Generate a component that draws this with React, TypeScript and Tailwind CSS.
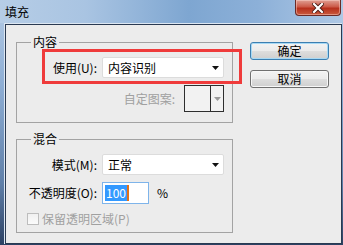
import type { ReactNode } from 'react';

function DropArrow({ muted = false }: { muted?: boolean }) {
  return (
    <svg width="7" height="4" viewBox="0 0 7 4" aria-hidden="true">
      <polygon points="0,0 7,0 3.5,4" fill={muted ? '#9a9a9a' : '#111'} />
    </svg>
  );
}

function Select({ value }: { value: string }) {
  return (
    <div className="flex h-[21px] w-[122px] items-center justify-between rounded-[2px] border border-[#dcdcdc] bg-white pr-[4px] pl-[5px]">
      <span className="leading-none">{value}</span>
      <DropArrow />
    </div>
  );
}

function Group({
  title,
  className,
  children,
}: {
  title: string;
  className: string;
  children: ReactNode;
}) {
  return (
    <div className={`relative w-[217px] border border-[#a3a3a3] ${className}`}>
      <span className="absolute top-[-8px] left-[14px] bg-[#ececec] px-[2px] leading-[14px]">
        {title}
      </span>
      {children}
    </div>
  );
}

function Button({ label, primary = false }: { label: string; primary?: boolean }) {
  return (
    <button
      type="button"
      className={`flex h-[18px] w-[79px] items-center justify-center rounded-[3px] border bg-[linear-gradient(#f3f3f3_0%,#ebebeb_48%,#dddddd_52%,#cfcfcf_100%)] leading-none ${
        primary
          ? 'border-[#3c7fb1] shadow-[inset_0_0_0_1px_#a7d9f5]'
          : 'border-[#707070] shadow-[inset_0_0_0_1px_#f7f7f7]'
      }`}
    >
      {label}
    </button>
  );
}

export default function App() {
  return (
    <div className="relative flex h-[245px] w-[343px] flex-col overflow-hidden bg-[linear-gradient(180deg,#b4cbe5_0%,#8eaed4_35%,#5f7fa8_75%,#2c4163_100%)] font-['Noto_Sans_CJK_SC','Microsoft_YaHei',sans-serif] text-[12px] text-black">
      {/* title bar */}
      <div className="flex h-[23px] items-center bg-[linear-gradient(90deg,#b6cde6_0%,#a9c4e2_25%,#7ea6d1_55%,#8cb0d8_75%,#aec8e5_100%)] pl-[5px] leading-none">
        填充
      </div>
      <div className="absolute top-0 right-[2px] flex h-[16px] w-[46px] items-center justify-center rounded-b-[4px] border border-t-0 border-[#6b2a26] bg-[linear-gradient(#e0a094_0%,#cc5a48_45%,#b7301c_55%,#c95a3e_100%)] shadow-[inset_0_0_0_1px_rgba(255,220,210,0.45)]">
        <svg width="12" height="10" viewBox="0 0 12 10" aria-hidden="true">
          <path d="M2 1 L10 9 M10 1 L2 9" stroke="#4a1a14" strokeWidth="4" strokeLinecap="square" />
          <path d="M2 1 L10 9 M10 1 L2 9" stroke="#fff" strokeWidth="2.2" strokeLinecap="square" />
        </svg>
      </div>

      {/* client area */}
      <div className="mr-[1px] mb-[1px] ml-[4px] flex-1 border-t border-l border-[#dde7f2]">
        <div className="flex h-full border border-[#2a3a52] bg-[#ececec]">
          <div className="pt-[17px] pl-[10px]">
            <Group title="内容" className="h-[81px]">
              <div className="mt-[14px] flex items-center">
                <span className="w-[80px] text-right leading-none">使用(U):</span>
                <div className="ml-[5px]">
                  <Select value="内容识别" />
                </div>
              </div>
              <div className="mt-[7px] flex items-center justify-end pr-[8px]">
                <span className="leading-none text-[#a0a0a0]">自定图案:</span>
                <div className="ml-[9px] flex h-[27px] w-[40px] border border-[#2e2e2e] bg-[#f2f2f2]">
                  <div className="flex-1 border-r border-[#2e2e2e]" />
                  <div className="flex w-[12px] items-center justify-center">
                    <DropArrow muted />
                  </div>
                </div>
              </div>
            </Group>

            <Group title="混合" className="mt-[16px] h-[94px]">
              <div className="mt-[14px] flex items-center">
                <span className="w-[80px] text-right leading-none">模式(M):</span>
                <div className="ml-[5px]">
                  <Select value="正常" />
                </div>
              </div>
              <div className="mt-[7px] flex items-center">
                <span className="w-[80px] text-right leading-none">不透明度(O):</span>
                <div className="ml-[5px] flex h-[22px] w-[47px] items-center border border-[#7eb4ea] bg-white pl-[2px]">
                  <span className="flex h-[16px] items-center bg-[#3399ff] px-[1px] leading-none text-white">
                    100
                  </span>
                  <span className="h-[16px] w-[2px] bg-[#e0701a]" />
                </div>
                <span className="ml-[8px] leading-none">%</span>
              </div>
              <div className="mt-[9px] ml-[10px] flex items-center">
                <span className="h-[12px] w-[12px] border border-[#bdbdbd] bg-[linear-gradient(#f0f0f0,#fbfbfb)]" />
                <span className="ml-[3px] leading-none text-[#a0a0a0]">保留透明区域(P)</span>
              </div>
            </Group>
          </div>

          <div className="ml-[17px] flex flex-col gap-[10px] pt-[17px]">
            <Button label="确定" primary />
            <Button label="取消" />
          </div>
        </div>
      </div>

      {/* annotation box */}
      <div className="absolute top-[49px] left-[42px] h-[35px] w-[200px] border-[3px] border-[#ef3b3b]" />
    </div>
  );
}
